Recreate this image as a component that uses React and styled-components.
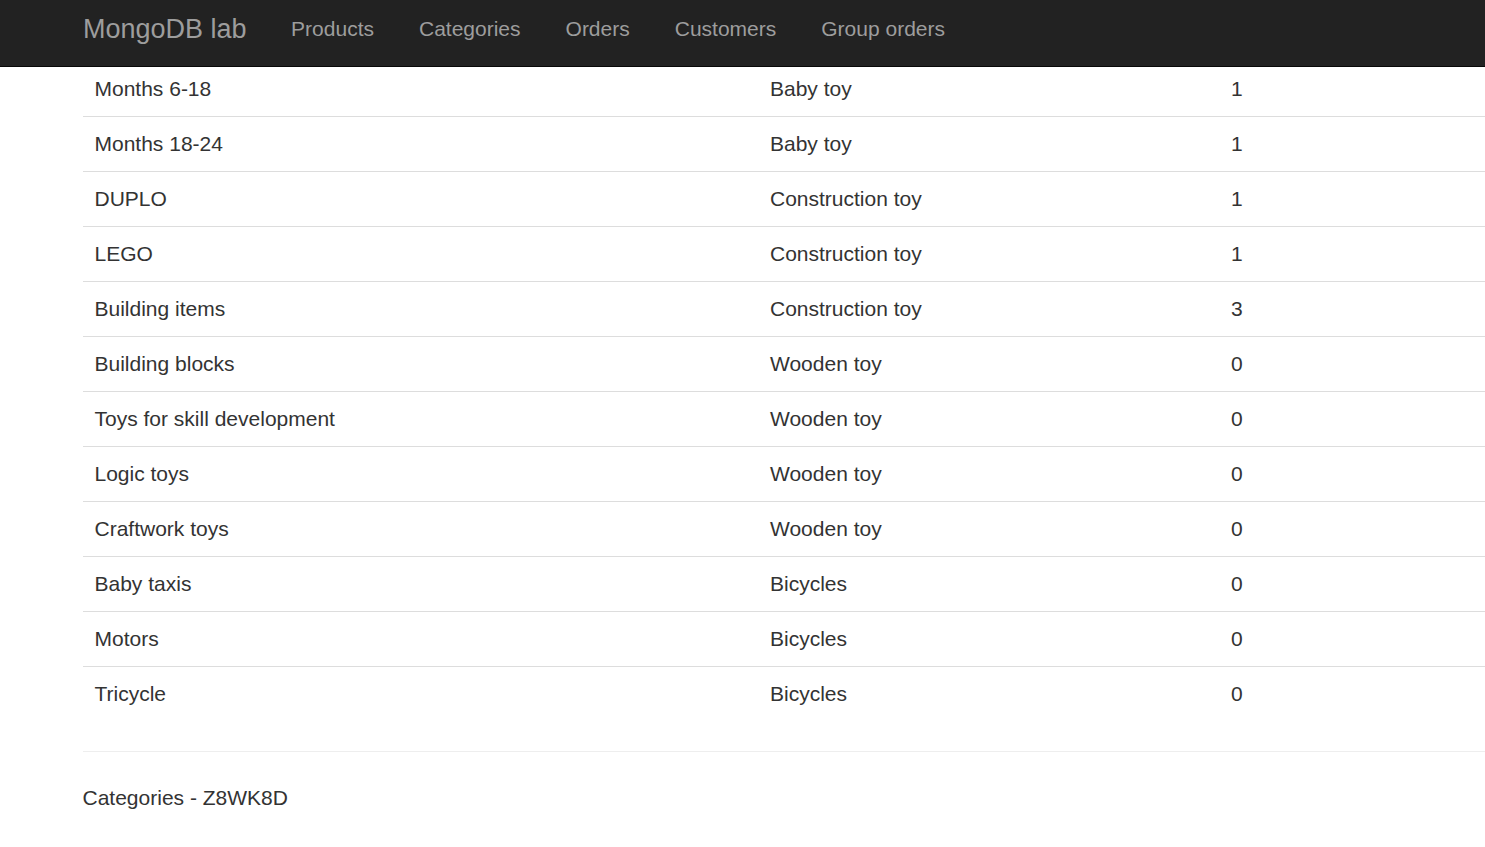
import React from "react";
import styled, { createGlobalStyle } from "styled-components";

const GlobalStyle = createGlobalStyle`
  html, body {
    margin: 0;
    padding: 0;
    background: #fff;
  }
  body {
    font-family: "Liberation Sans", Arial, Helvetica, sans-serif;
    font-size: 21px;
    line-height: 30px;
    color: #333;
    overflow-x: hidden;
  }
  * { box-sizing: border-box; }
`;

const Navbar = styled.nav`
  position: fixed;
  top: 0;
  left: 0;
  right: 0;
  z-index: 10;
  height: 67px;
  background: #222;
  border-bottom: 1px solid #080808;
  display: flex;
  align-items: flex-start;
  padding: 14px 0 0 83px;
`;

const Brand = styled.a`
  font-size: 27px;
  line-height: 30px;
  color: #9d9d9d;
  text-decoration: none;
  padding-right: 22px;
  white-space: nowrap;
`;

const NavList = styled.ul`
  display: flex;
  list-style: none;
  margin: 0;
  padding: 0;
`;

const NavLink = styled.a`
  display: block;
  padding: 0 22.5px;
  font-size: 21px;
  line-height: 30px;
  color: #9d9d9d;
  text-decoration: none;
  white-space: nowrap;
`;

const Main = styled.main`
  padding: 61px 0 0 82.5px;
`;

const Table = styled.table`
  width: 100%;
  border-collapse: collapse;
  border-spacing: 0;
  table-layout: fixed;
  margin-bottom: 30px;
`;

const Cell = styled.td`
  padding: 12px;
  line-height: 30px;
  border-top: 1px solid #ddd;
  vertical-align: top;
  white-space: nowrap;
`;

const Rule = styled.hr`
  margin: 30px 0 31px;
  border: 0;
  border-top: 1px solid #eee;
  height: 0;
`;

const Footer = styled.footer`
  font-size: 21px;
  line-height: 30px;
  color: #333;
  padding-bottom: 30px;
`;

const navItems = ["Products", "Categories", "Orders", "Customers", "Group orders"];

const rows = [
  ["Months 6-18", "Baby toy", 1],
  ["Months 18-24", "Baby toy", 1],
  ["DUPLO", "Construction toy", 1],
  ["LEGO", "Construction toy", 1],
  ["Building items", "Construction toy", 3],
  ["Building blocks", "Wooden toy", 0],
  ["Toys for skill development", "Wooden toy", 0],
  ["Logic toys", "Wooden toy", 0],
  ["Craftwork toys", "Wooden toy", 0],
  ["Baby taxis", "Bicycles", 0],
  ["Motors", "Bicycles", 0],
  ["Tricycle", "Bicycles", 0],
];

export default function App() {
  return (
    <>
      <GlobalStyle />
      <Navbar>
        <Brand href="#">MongoDB lab</Brand>
        <NavList>
          {navItems.map((n) => (
            <li key={n}>
              <NavLink href="#">{n}</NavLink>
            </li>
          ))}
        </NavList>
      </Navbar>
      <Main>
        <Table>
          <colgroup>
            <col style={{ width: "675.5px" }} />
            <col style={{ width: "461px" }} />
            <col />
          </colgroup>
          <tbody>
            {rows.map(([name, parent, count]) => (
              <tr key={name}>
                <Cell>{name}</Cell>
                <Cell>{parent}</Cell>
                <Cell>{count}</Cell>
              </tr>
            ))}
          </tbody>
        </Table>
        <Rule />
        <Footer>Categories - Z8WK8D</Footer>
      </Main>
    </>
  );
}
